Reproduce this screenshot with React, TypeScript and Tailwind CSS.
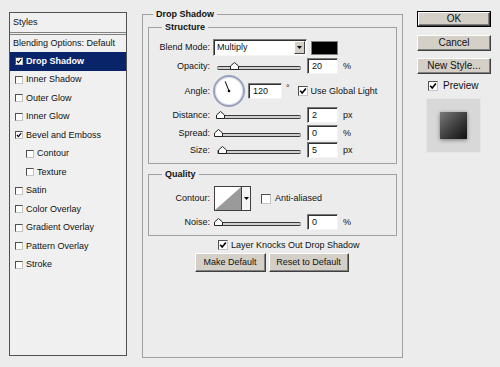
import React from 'react';

const styleRows = [
    { label: 'Inner Shadow', on: false, sub: false },
    { label: 'Outer Glow', on: false, sub: false },
    { label: 'Inner Glow', on: false, sub: false },
    { label: 'Bevel and Emboss', on: true, sub: false },
    { label: 'Contour', on: false, sub: true },
    { label: 'Texture', on: false, sub: true },
    { label: 'Satin', on: false, sub: false },
    { label: 'Color Overlay', on: false, sub: false },
    { label: 'Gradient Overlay', on: false, sub: false },
    { label: 'Pattern Overlay', on: false, sub: false },
    { label: 'Stroke', on: false, sub: false },
];

function Box({ on, className = 'w-[8px] h-[8px]' }: { on?: boolean; className?: string }) {
    return (
        <span className={`${className} shrink-0 bg-white border border-t-[#505050] border-l-[#505050] border-r-[#c4c4c4] border-b-[#c4c4c4] flex items-center justify-center`}>
            {on && (
                <svg viewBox="0 0 8 8" className="w-full h-full">
                    <path d="M1.2 3.8 L3.2 6.1 L6.9 1.5" fill="none" stroke="#000" strokeWidth="1.6" />
                </svg>
            )}
        </span>
    );
}

function Slider({ at }: { at: number }) {
    return (
        <div className="relative w-[84px] h-[9px] flex items-end">
            <div className="w-full h-[4px] mb-[1px] border-t border-b border-[#3a3a3a] bg-[#cfcfcf] rounded-[2px]" />
            <svg className="absolute top-0" style={{ left: at }} width="9" height="8" viewBox="0 0 9 8">
                <path d="M0.5 7.5 V4 L4.5 0.5 L8.5 4 V7.5 Z" fill="#fff" stroke="#222" />
            </svg>
        </div>
    );
}

function Field({ v, className }: { v: string; className: string }) {
    return (
        <div className={`${className} h-[16px] bg-white border border-t-[#7a7a7a] border-l-[#7a7a7a] border-r-[#f4f4f4] border-b-[#f4f4f4] shadow-[inset_1px_1px_0_#303030] flex items-center pl-[4px]`}>
            {v}
        </div>
    );
}

function SliderRow({ label, at, v, unit, className }: { label: string; at: number; v: string; unit: string; className: string }) {
    return (
        <div className={`flex items-center h-[16px] ${className}`}>
            <span className="w-[61px] text-right">{label}</span>
            <div className="ml-[7px]">
                <Slider at={at} />
            </div>
            <Field v={v} className="ml-[6px] w-[31px]" />
            <span className="ml-[5px]">{unit}</span>
        </div>
    );
}

function Arrow() {
    return (
        <svg width="5" height="3" viewBox="0 0 5 3">
            <path d="M0 0 H5 L2.5 3 Z" fill="#000" />
        </svg>
    );
}

const btn = 'h-[19px] bg-[#d4d0c8] border border-t-white border-l-white border-r-[#404040] border-b-[#404040] shadow-[inset_-1px_-1px_0_#808080] flex items-center justify-center';
const rbtn = 'h-[16px] bg-[#d4d0c8] border border-t-white border-l-white border-r-[#404040] border-b-[#404040] shadow-[inset_-1px_-1px_0_#808080] flex items-center justify-center';

export default function App() {
    return (
        <div className="w-[500px] h-[367px] bg-[#ececec] flex items-start text-[9px] leading-[11px] text-[#111] font-['Liberation_Sans',Arial,sans-serif] overflow-hidden">
            {/* styles list */}
            <div className="ml-[9px] mt-[12px] w-[118px] h-[344px] border border-[#505050] bg-[#f0f0f0] flex flex-col">
                <div className="h-[22px] flex items-center pl-[3px] border-b-[3px] border-double border-[#808080]">Styles</div>
                <div className="h-[17px] flex items-center pl-[3px]">Blending Options: Default</div>
                <div className="h-[18.5px] flex items-center pl-[5px] gap-[3px] bg-[#0a246a] text-white font-bold">
                    <Box on />
                    <span>Drop Shadow</span>
                </div>
                {styleRows.map((r) => (
                    <div key={r.label} className={`h-[18.5px] flex items-center gap-[3px] ${r.sub ? 'pl-[16px]' : 'pl-[5px]'}`}>
                        <Box on={r.on} />
                        <span>{r.label}</span>
                    </div>
                ))}
            </div>

            {/* drop shadow group */}
            <div className="ml-[15px] mt-[14px] w-[261px] h-[344px] border border-[#a0a0a0] flex flex-col">
                <div className="-mt-[6px] ml-[10px] px-[3px] w-fit bg-[#ececec] font-bold">Drop Shadow</div>

                <div className="mt-[7px] mx-[5px] border border-[#a0a0a0] pb-[5px] flex flex-col">
                    <div className="-mt-[6px] ml-[13px] px-[3px] w-fit bg-[#ececec] font-bold">Structure</div>

                    <div className="mt-[6px] flex items-center h-[17px]">
                        <span className="w-[61px] text-right">Blend Mode:</span>
                        <div className="ml-[3px] w-[94px] h-[17px] bg-white border border-t-[#7a7a7a] border-l-[#7a7a7a] border-r-[#f4f4f4] border-b-[#f4f4f4] shadow-[inset_1px_1px_0_#303030] flex items-center">
                            <span className="flex-1 pl-[3px]">Multiply</span>
                            <span className="w-[11px] h-[13px] mr-[1px] bg-[#d4d0c8] border border-t-white border-l-white border-r-[#404040] border-b-[#404040] flex items-center justify-center">
                                <Arrow />
                            </span>
                        </div>
                        <div className="ml-[4px] w-[27px] h-[14px] bg-black border border-[#808080]" />
                    </div>

                    <SliderRow label="Opacity:" at={13} v="20" unit="%" className="mt-[2px]" />

                    <div className="mt-[1px] flex items-center h-[32px]">
                        <span className="w-[61px] text-right">Angle:</span>
                        <div className="ml-[3px] w-[32px] h-[32px] rounded-full border-[2px] border-[#9aa0bc] bg-white shadow-[inset_0_0_0_1px_#dde0ec]">
                            <svg viewBox="0 0 28 28" className="w-full h-full">
                                <line x1="14" y1="14" x2="10.2" y2="4.4" stroke="#000" strokeWidth="1" />
                                <circle cx="14" cy="14" r="1.3" fill="#000" />
                            </svg>
                        </div>
                        <Field v="120" className="ml-[3px] w-[34px]" />
                        <span className="ml-[4px] self-start mt-[8px]">°</span>
                        <span className="ml-[8px]">
                            <Box on className="w-[10px] h-[10px]" />
                        </span>
                        <span className="ml-[3px]">Use Global Light</span>
                    </div>

                    <SliderRow label="Distance:" at={-1} v="2" unit="px" className="mt-0" />
                    <SliderRow label="Spread:" at={-3} v="0" unit="%" className="mt-[2px]" />
                    <SliderRow label="Size:" at={1} v="5" unit="px" className="mt-[1px]" />
                </div>

                <div className="mt-[10px] mx-[5px] border border-[#a0a0a0] pb-[5px] flex flex-col">
                    <div className="-mt-[6px] ml-[13px] px-[3px] w-fit bg-[#ececec] font-bold">Quality</div>

                    <div className="mt-[6px] flex items-center h-[25px]">
                        <span className="w-[61px] text-right">Contour:</span>
                        <div className="ml-[4px] flex h-[25px] border border-[#404040] bg-white">
                            <svg width="26" height="23" viewBox="0 0 26 23">
                                <polygon points="0,23 26,0 26,23" fill="#9a9a9a" />
                            </svg>
                            <span className="w-[9px] border-l border-[#404040] bg-[#f4f4f4] flex items-center justify-center">
                                <Arrow />
                            </span>
                        </div>
                        <span className="ml-[10px]">
                            <Box className="w-[10px] h-[10px]" />
                        </span>
                        <span className="ml-[4px]">Anti-aliased</span>
                    </div>

                    <SliderRow label="Noise:" at={-3} v="0" unit="%" className="mt-[3px]" />
                </div>

                <div className="mt-[3px] h-[12px] pl-[75px] flex items-center gap-[3px]">
                    <Box on className="w-[10px] h-[10px]" />
                    <span>Layer Knocks Out Drop Shadow</span>
                </div>

                <div className="mt-[2px] flex justify-center gap-[3px] pr-[2px]">
                    <div className={`${btn} w-[71px]`}>Make Default</div>
                    <div className={`${btn} w-[80px]`}>Reset to Default</div>
                </div>
            </div>

            {/* buttons + preview */}
            <div className="ml-[14px] w-[74px] flex flex-col text-[10px] leading-[12px]">
                <div className="mt-[11px] h-[16px] border border-black">
                    <div className={`${rbtn} h-full`}>OK</div>
                </div>
                <div className={`${rbtn} mt-[8px]`}>Cancel</div>
                <div className={`${rbtn} mt-[7px]`}>New Style...</div>
                <div className="mt-[7px] pl-[11px] flex items-center gap-[5px] h-[10px]">
                    <Box on className="w-[10px] h-[10px]" />
                    <span>Preview</span>
                </div>
                <div className="mt-[7px] ml-[9px] w-[55px] h-[55px] bg-[#d8d8d8] border border-[#e6e6e6] flex items-center justify-center">
                    <div className="w-[27px] h-[27px] bg-gradient-to-br from-[#7a7a7a] to-[#111] shadow-[0_1px_4px_rgba(0,0,0,0.45)]" />
                </div>
            </div>
        </div>
    );
}
